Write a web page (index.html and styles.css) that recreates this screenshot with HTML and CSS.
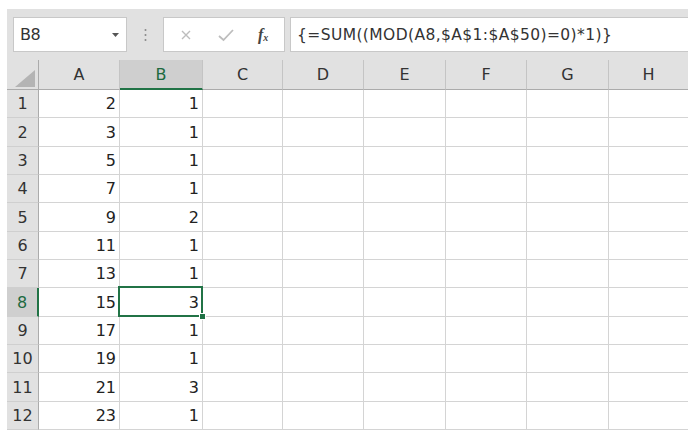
FILE: index.html
```html
<!DOCTYPE html>
<html>
<head>
<meta charset="utf-8">
<link rel="stylesheet" href="styles.css">
</head>
<body>
<div class="frame">
  <div class="toolbar">
    <div class="namebox">
      <span class="name">B8</span>
      <svg class="dd" width="7" height="4" viewBox="0 0 7 4"><path d="M0 0H7L3.5 4Z" fill="#555"/></svg>
    </div>
    <div class="grip">
      <svg width="3" height="14" viewBox="0 0 3 14"><circle cx="1.5" cy="2" r="1" fill="#888"/><circle cx="1.5" cy="7" r="1" fill="#888"/><circle cx="1.5" cy="12" r="1" fill="#888"/></svg>
    </div>
    <div class="btns">
      <svg class="ico" width="12" height="12" viewBox="0 0 12 12"><path d="M2 2L10 10M10 2L2 10" stroke="#bdbdbd" stroke-width="1.4"/></svg>
      <svg class="ico" width="16" height="14" viewBox="0 0 16 14"><path d="M1 8L5.5 12L15 2" stroke="#bdbdbd" stroke-width="1.8" fill="none"/></svg>
      <span class="fx"><i>f</i><sub>x</sub></span>
    </div>
    <div class="formula">{=SUM((MOD(A8,$A$1:$A$50)=0)*1)}</div>
  </div>
  <div class="grid">
    <div class="hd corner"><svg width="20" height="17" viewBox="0 0 20 17"><path d="M20 0V17H0Z" fill="#b4b4b4"/></svg></div>
    <div class="hd col">A</div>
    <div class="hd col sel">B</div>
    <div class="hd col">C</div>
    <div class="hd col">D</div>
    <div class="hd col">E</div>
    <div class="hd col">F</div>
    <div class="hd col">G</div>
    <div class="hd col last">H</div>

    <div class="hd row">1</div><div class="c">2</div><div class="c">1</div><div class="c"></div><div class="c"></div><div class="c"></div><div class="c"></div><div class="c"></div><div class="c last"></div>
    <div class="hd row">2</div><div class="c">3</div><div class="c">1</div><div class="c"></div><div class="c"></div><div class="c"></div><div class="c"></div><div class="c"></div><div class="c last"></div>
    <div class="hd row">3</div><div class="c">5</div><div class="c">1</div><div class="c"></div><div class="c"></div><div class="c"></div><div class="c"></div><div class="c"></div><div class="c last"></div>
    <div class="hd row">4</div><div class="c">7</div><div class="c">1</div><div class="c"></div><div class="c"></div><div class="c"></div><div class="c"></div><div class="c"></div><div class="c last"></div>
    <div class="hd row">5</div><div class="c">9</div><div class="c">2</div><div class="c"></div><div class="c"></div><div class="c"></div><div class="c"></div><div class="c"></div><div class="c last"></div>
    <div class="hd row">6</div><div class="c">11</div><div class="c">1</div><div class="c"></div><div class="c"></div><div class="c"></div><div class="c"></div><div class="c"></div><div class="c last"></div>
    <div class="hd row">7</div><div class="c">13</div><div class="c">1</div><div class="c"></div><div class="c"></div><div class="c"></div><div class="c"></div><div class="c"></div><div class="c last"></div>
    <div class="hd row sel">8</div><div class="c">15</div><div class="c active">3<span class="handle"></span></div><div class="c"></div><div class="c"></div><div class="c"></div><div class="c"></div><div class="c"></div><div class="c last"></div>
    <div class="hd row">9</div><div class="c">17</div><div class="c">1</div><div class="c"></div><div class="c"></div><div class="c"></div><div class="c"></div><div class="c"></div><div class="c last"></div>
    <div class="hd row">10</div><div class="c">19</div><div class="c">1</div><div class="c"></div><div class="c"></div><div class="c"></div><div class="c"></div><div class="c"></div><div class="c last"></div>
    <div class="hd row">11</div><div class="c">21</div><div class="c">3</div><div class="c"></div><div class="c"></div><div class="c"></div><div class="c"></div><div class="c"></div><div class="c last"></div>
    <div class="hd row">12</div><div class="c">23</div><div class="c">1</div><div class="c"></div><div class="c"></div><div class="c"></div><div class="c"></div><div class="c"></div><div class="c last"></div>
  </div>
</div>
</body>
</html>
```
FILE: styles.css
```css
* { box-sizing: border-box; }
html, body { margin: 0; padding: 0; background: #fff; }
body {
  font-family: "DejaVu Sans", "Noto Sans CJK JP", sans-serif;
  color: #222;
}
.frame {
  width: 681px;
  margin: 9px 0 0 7px;
}
.toolbar {
  height: 51px;
  background: #e1e1e1;
  display: flex;
  align-items: flex-start;
  padding: 8px 0 0 6px;
}
.namebox {
  width: 114px;
  height: 35px;
  background: #fff;
  border: 1px solid #c8c8c8;
  display: flex;
  align-items: center;
  justify-content: space-between;
  padding: 0 7px 0 6px;
}
.name { font-size: 16px; color: #333; letter-spacing: -0.5px; }
.dd { margin-top: 1px; }
.grip {
  width: 36px;
  height: 35px;
  display: flex;
  align-items: center;
  justify-content: center;
}
.btns {
  width: 122px;
  height: 35px;
  background: #fff;
  border: 1px solid #c8c8c8;
  display: flex;
  align-items: center;
  padding: 0 0 0 16px;
}
.btns .ico:first-child { margin-right: 26px; }
.btns .ico:nth-child(2) { margin-right: 24px; }
.fx {
  font-family: "Liberation Serif", serif;
  font-size: 16px;
  color: #444;
  font-style: italic;
  line-height: 1;
}
.fx i { font-weight: bold; }
.fx sub { font-size: 10px; vertical-align: -1px; font-weight: bold; }
.formula {
  margin-left: 5px;
  flex: 1;
  height: 35px;
  background: #fff;
  border: 1px solid #c8c8c8;
  border-right: none;
  font-size: 15.5px;
  color: #333;
  display: flex;
  align-items: center;
  padding-left: 6px;
  letter-spacing: 0.4px;
}
.grid {
  display: grid;
  grid-template-columns: 32px 81px 83px 80px 81px 82px 81px 82px 79px;
  grid-template-rows: 30px 28px 29px 28px 28px 29px 28px 28px 29px 28px 28px 29px 28px;
}
.hd {
  background: #e1e1e1;
  display: flex;
  align-items: center;
  justify-content: center;
  font-size: 16px;
  color: #333;
}
.col {
  border-right: 1px solid #c4c4c4;
  border-bottom: 1px solid #ababab;
}
.col.last { border-right: none; }
.col.sel {
  background: #cfcfcf;
  border-bottom: 2px solid #217346;
  color: #1d6a3f;
}
.corner {
  border-right: 1px solid #ababab;
  border-bottom: 1px solid #ababab;
  align-items: flex-end;
  justify-content: flex-end;
  padding: 0 3px 2px 0;
}
.row {
  border-right: 1px solid #ababab;
  border-bottom: 1px solid #cfcfcf;
}
.row.sel {
  background: #cfcfcf;
  border-right: 2px solid #217346;
  color: #1d6a3f;
}
.c {
  border-right: 1px solid #d4d4d4;
  border-bottom: 1px solid #d4d4d4;
  font-size: 16px;
  display: flex;
  align-items: center;
  justify-content: flex-end;
  padding-right: 3px;
  background: #fff;
}
.c.last { border-right: none; }
.active {
  position: relative;
}
.active::after {
  content: "";
  position: absolute;
  left: -2px;
  top: -2px;
  right: -1px;
  bottom: -1px;
  border: 2px solid #217346;
}
.handle {
  position: absolute;
  right: -4px;
  bottom: -4px;
  width: 7px;
  height: 7px;
  background: #217346;
  border: 1px solid #fff;
  z-index: 2;
}
```
